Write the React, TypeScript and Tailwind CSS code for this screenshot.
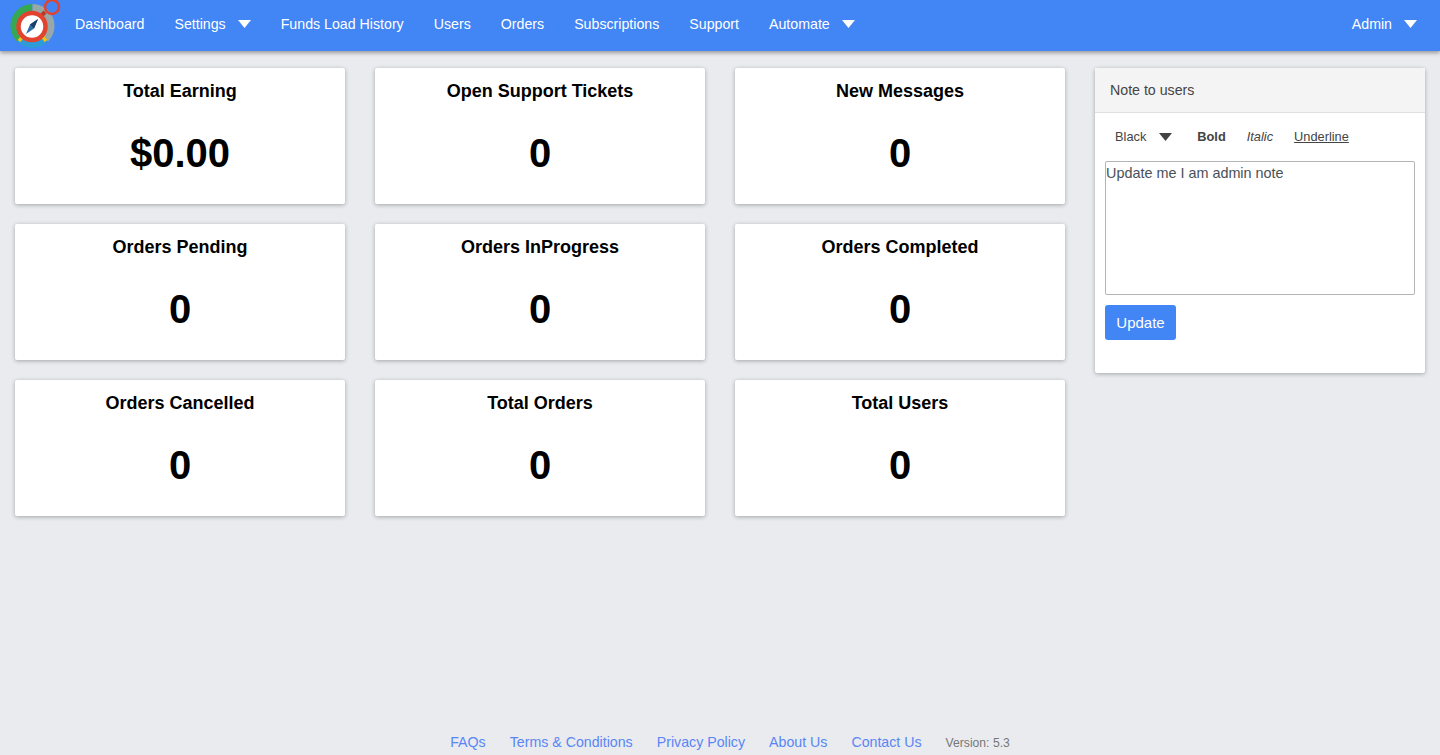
const NAV_LINKS = [
  { label: 'Dashboard' },
  { label: 'Settings', caret: true },
  { label: 'Funds Load History' },
  { label: 'Users' },
  { label: 'Orders' },
  { label: 'Subscriptions' },
  { label: 'Support' },
  { label: 'Automate', caret: true },
]

const STATS = [
  { title: 'Total Earning', value: '$0.00' },
  { title: 'Open Support Tickets', value: '0' },
  { title: 'New Messages', value: '0' },
  { title: 'Orders Pending', value: '0' },
  { title: 'Orders InProgress', value: '0' },
  { title: 'Orders Completed', value: '0' },
  { title: 'Orders Cancelled', value: '0' },
  { title: 'Total Orders', value: '0' },
  { title: 'Total Users', value: '0' },
]

const FOOTER_LINKS = ['FAQs', 'Terms & Conditions', 'Privacy Policy', 'About Us', 'Contact Us']

function Logo() {
  return (
    <svg width="48" height="48" viewBox="0 0 48 48" className="shrink-0 overflow-visible">
      <path d="M23.5 3 A 22 22 0 0 0 8 40.6 L 23.5 25 Z" fill="#34a853" />
      <path d="M23.5 3 A 22 22 0 0 1 39 40.6 L 23.5 25 Z" fill="#98a8a8" />
      <path d="M8 40.6 A 22 22 0 0 0 39 40.6 L 23.5 25 Z" fill="#2f9bd8" />
      <path d="M14 35 L 10 40 M 33 35 L 37 40" stroke="#f4c20d" strokeWidth="3.5" />
      <path d="M33 14 L 36 11" stroke="#b8392c" strokeWidth="4" />
      <circle cx="23" cy="25.5" r="13.5" fill="#fff" stroke="#e2432f" strokeWidth="4.5" />
      <path d="M29 18 L 25 27.5 L 17 33 L 21 23.5 Z" fill="#2f6fa8" />
      <path d="M29 18 L 21 23.5 L 25 27.5 Z" fill="#1d3f66" />
      <circle cx="43" cy="6" r="7" fill="none" stroke="#e2432f" strokeWidth="2.5" />
    </svg>
  )
}

function Caret({ className }: { className: string }) {
  return (
    <svg width="13" height="8" viewBox="0 0 13 8" className={className}>
      <path d="M0 0 H13 L6.5 8 Z" fill="currentColor" />
    </svg>
  )
}

function StatCard({ title, value }: { title: string; value: string }) {
  return (
    <div className="h-[136px] rounded-[2px] bg-white text-center text-black shadow-[0_1px_4px_rgba(0,0,0,0.3)]">
      <h3 className="pt-[11px] text-[18px] leading-[24px] font-bold">{title}</h3>
      <p className="pt-[27px] text-[40px] leading-[46px] font-bold">{value}</p>
    </div>
  )
}

export default function App() {
  return (
    <div className="flex min-h-[755px] flex-col bg-[#e9ebef] font-['Liberation_Sans',Arial,sans-serif]">
      {/* Top nav */}
      <nav className="flex h-[51px] items-center bg-[#4285f4] pr-[23px] pb-[2px] pl-[9px] text-[14.2px] text-white shadow-[0_2px_4px_rgba(0,0,0,0.35)]">
        <Logo />
        <div className="ml-[18px] flex items-center gap-[30px]">
          {NAV_LINKS.map((link) => (
            <span key={link.label} className="flex items-center">
              {link.label}
              {link.caret && <Caret className="ml-[12px] text-white" />}
            </span>
          ))}
        </div>
        <span className="ml-auto flex items-center">
          Admin
          <Caret className="ml-[12px] text-white" />
        </span>
      </nav>

      {/* Body */}
      <main className="flex flex-1 gap-[30px] px-[15px] pt-[17px]">
        <div className="grid w-[1050px] grid-cols-3 content-start gap-x-[30px] gap-y-[20px]">
          {STATS.map((stat) => (
            <StatCard key={stat.title} title={stat.title} value={stat.value} />
          ))}
        </div>

        {/* Note panel */}
        <aside className="h-[305px] w-[330px] rounded-[2px] bg-white text-[#444] shadow-[0_1px_4px_rgba(0,0,0,0.3)]">
          <div className="flex h-[45px] items-center border-b border-[#dfdfdf] bg-[#f4f4f4] px-[15px] pt-[2px] text-[14.2px]">
            Note to users
          </div>
          <div className="px-[10px] pt-[15px]">
            <div className="flex h-[18px] items-center pl-[10px] text-[12.8px]">
              <span>Black</span>
              <Caret className="ml-[13px] text-[#444]" />
              <span className="ml-[25px] font-bold">Bold</span>
              <span className="ml-[21px] italic">Italic</span>
              <span className="ml-[21px] underline">Underline</span>
            </div>
            <textarea
              readOnly
              defaultValue="Update me I am admin note"
              className="mt-[15px] block h-[134px] w-[310px] resize-none rounded-[2px] border border-[#b5b5b5] px-0 pt-px text-[14.4px] leading-[20px] text-[#495057] outline-none"
            />
            <button className="mt-[10px] h-[35px] w-[71px] rounded-[3px] bg-[#4285f4] pt-[2px] text-[15px] text-white">
              Update
            </button>
          </div>
        </aside>
      </main>

      {/* Footer */}
      <footer className="flex h-[26px] items-center justify-center gap-[24px] pt-[2px] pl-[20px] text-[14.2px] text-[#5a86f5]">
        {FOOTER_LINKS.map((link) => (
          <span key={link}>{link}</span>
        ))}
        <span className="text-[12.16px] text-[#777]">Version: 5.3</span>
      </footer>
    </div>
  )
}
